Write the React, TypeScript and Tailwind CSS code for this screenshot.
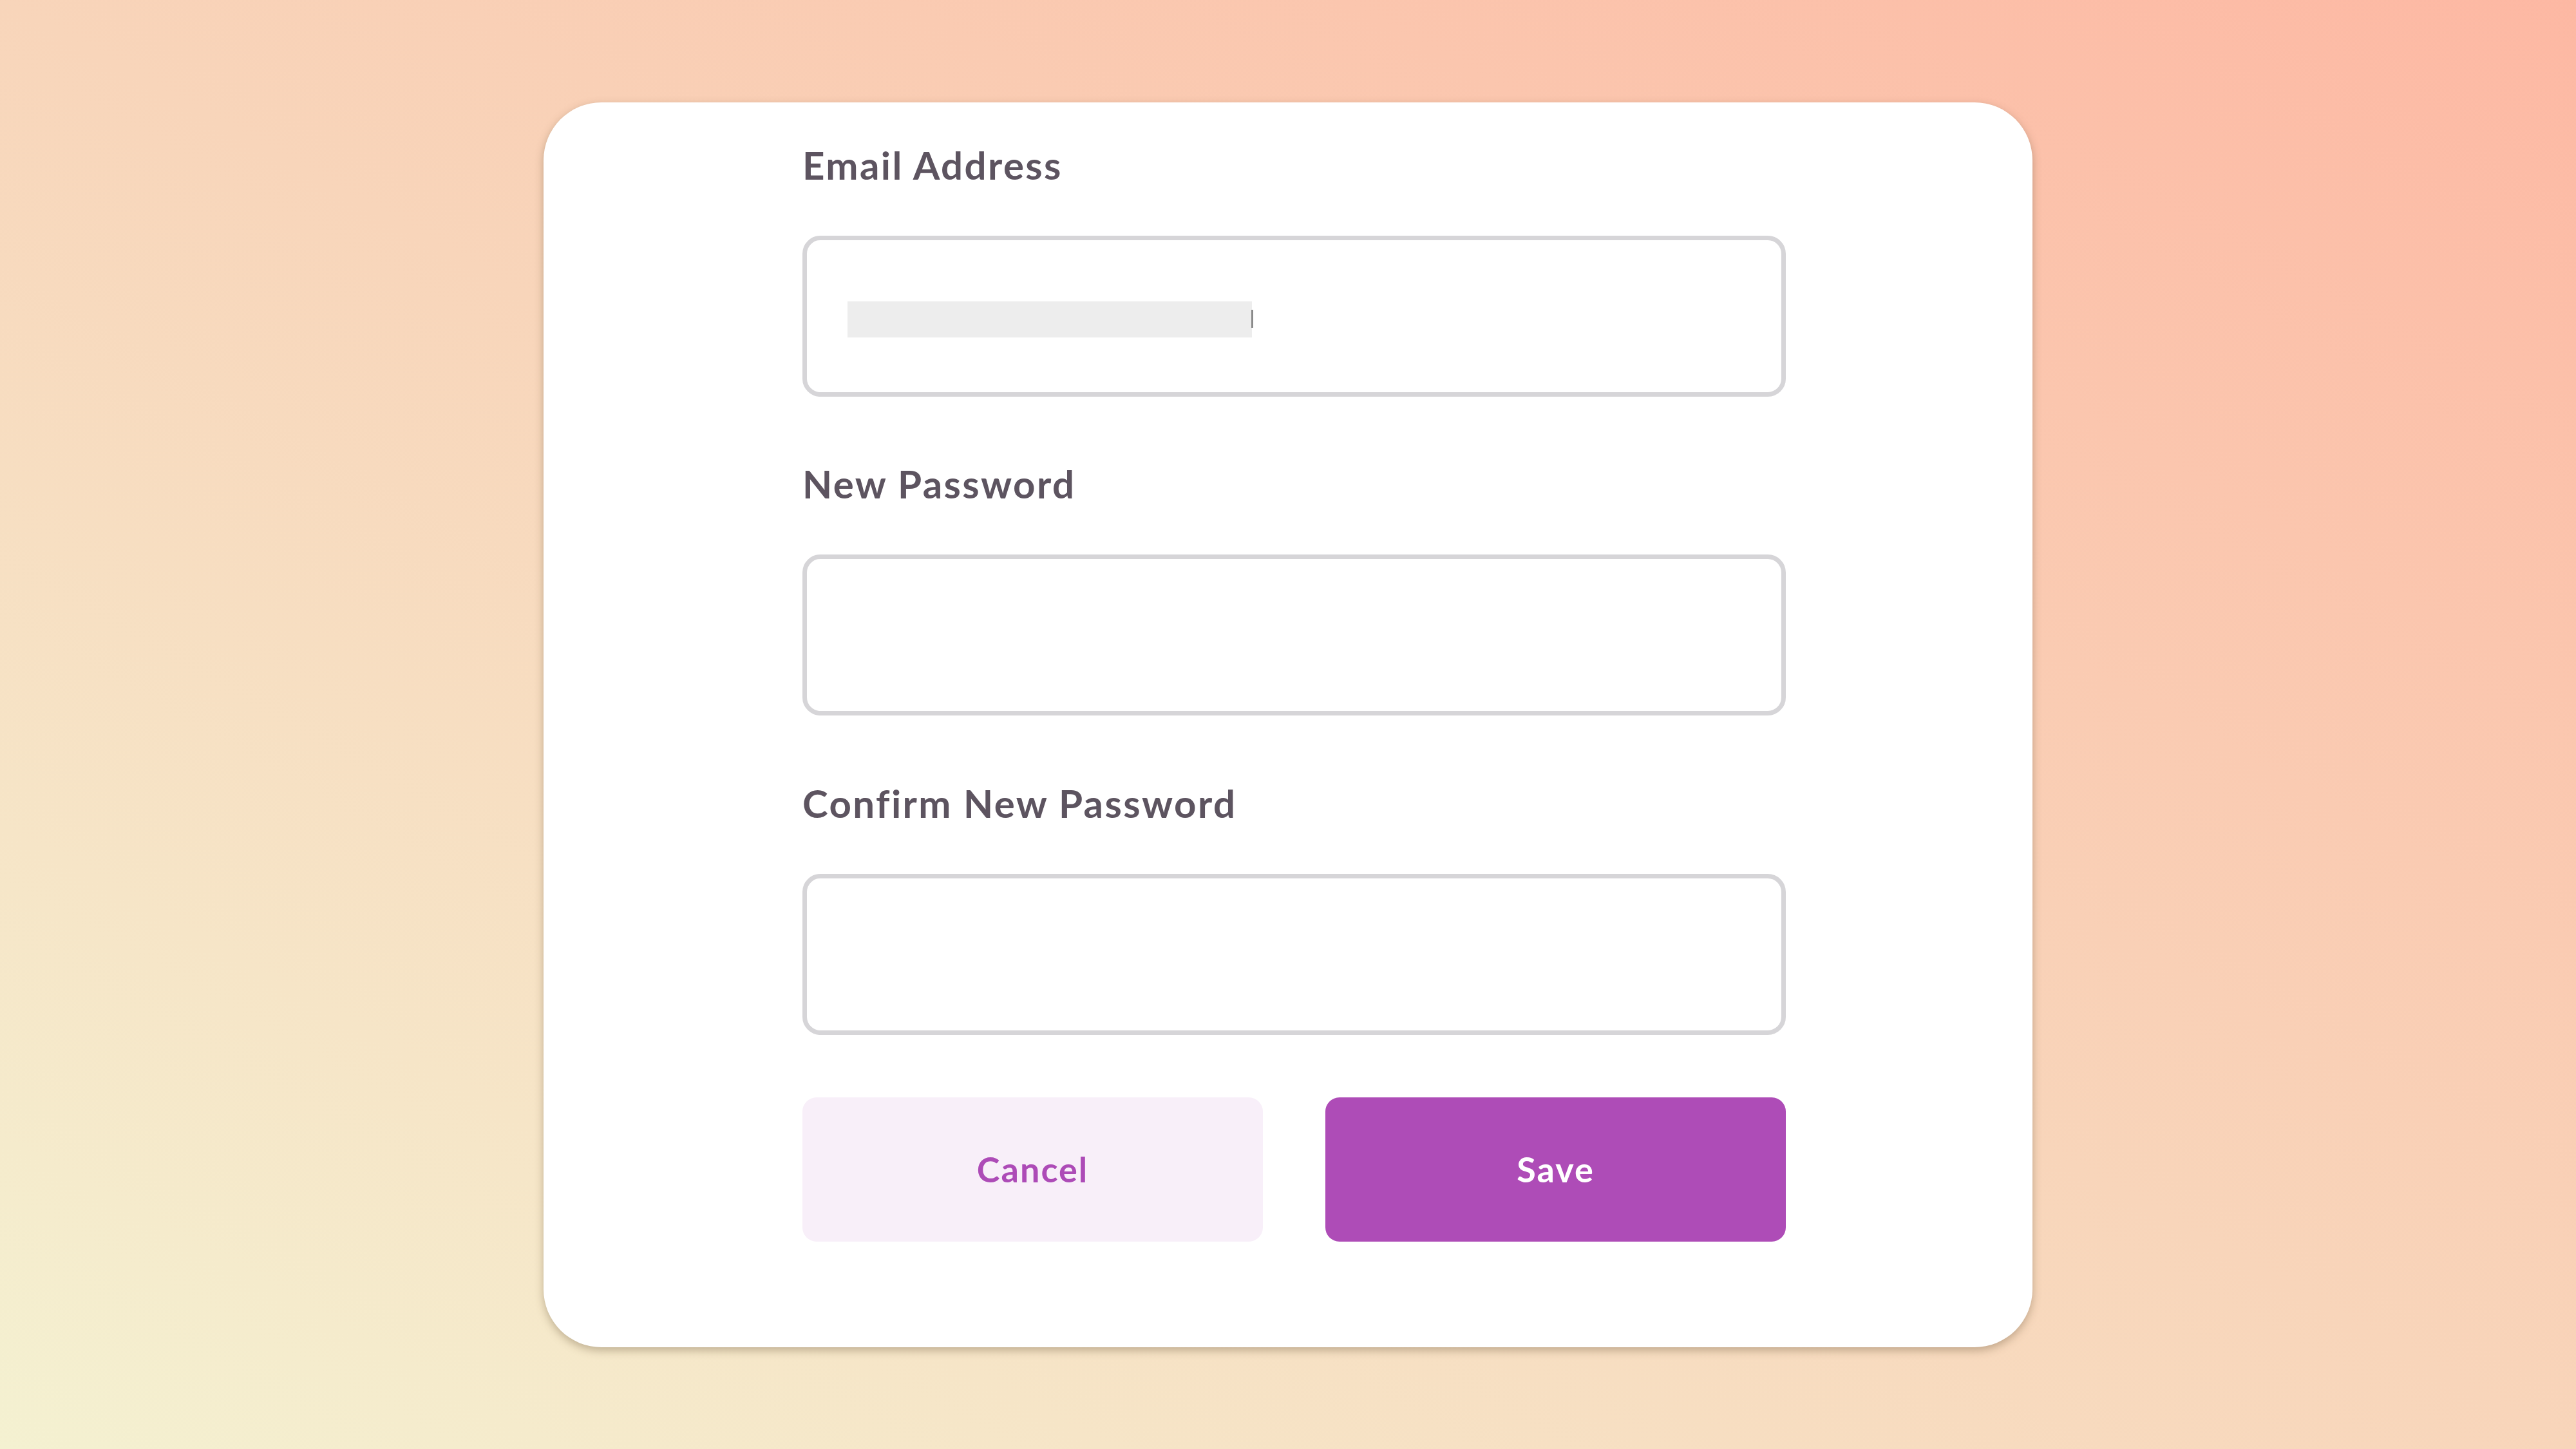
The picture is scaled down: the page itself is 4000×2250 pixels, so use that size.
import React from 'react';

type FieldProps = {
  label: string;
  children?: React.ReactNode;
  className?: string;
};

const Field: React.FC<FieldProps> = ({ label, children, className = '' }) => (
  <div className={`flex flex-col ${className}`}>
    <label className="text-[60px] leading-[59px] font-bold text-[#5d5460] tracking-[2.4px]">{label}</label>
    <div className="mt-[80px] h-[250px] w-[1527px] rounded-[28px] border-[7px] border-[#d6d5d8] bg-white flex items-center">
      {children}
    </div>
  </div>
);

const App: React.FC = () => {
  return (
    <div
      className="w-[4000px] h-[2250px] flex items-center justify-center bg-linear-to-tr from-[#f4f1d1] via-[#f8d5ba] to-[#fdb8a3]"
      style={{ fontFamily: 'Lato, "Open Sans", sans-serif' }}
    >
      {/* Card */}
      <div className="w-[2312px] h-[1933px] bg-white rounded-[90px] shadow-[0_5px_14px_rgba(90,70,40,0.35)] pt-[68px] pl-[402px] flex flex-col">
        <Field label="Email Address">
          {/* redacted email value */}
          <div className="relative ml-[63px] mt-[10px] h-[56px] w-[628px] bg-[#ededed]">
            <div className="absolute right-[-2px] top-[13px] h-[28px] w-[3px] bg-[#8a8a8a]" />
          </div>
        </Field>

        <Field label="New Password" className="mt-[106px]" />

        <Field label="Confirm New Password" className="mt-[107px]" />

        {/* Buttons */}
        <div className="mt-[97px] w-[1527px] grid grid-cols-2 gap-[97px]">
          <button className="h-[224px] rounded-[22px] bg-[#f8eff9] text-[#ad4bb7] text-[54px] font-bold tracking-[2px]">
            Cancel
          </button>
          <button className="h-[224px] rounded-[22px] bg-[#ae4cb7] text-white text-[54px] font-bold tracking-[2px]">
            Save
          </button>
        </div>
      </div>
    </div>
  );
};

export default App;
